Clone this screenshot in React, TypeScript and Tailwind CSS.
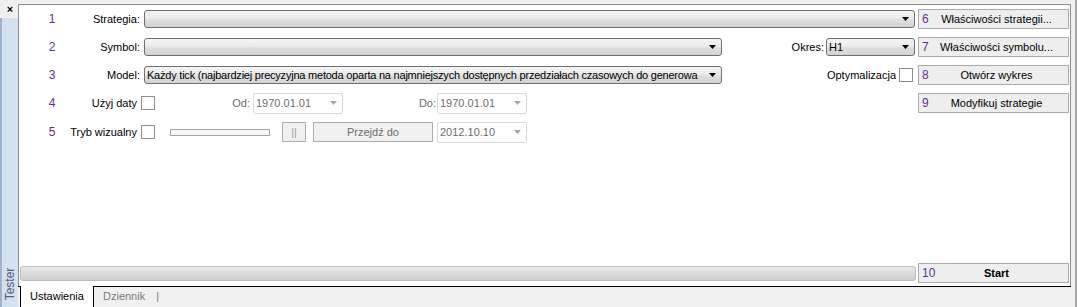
import type { ReactNode } from "react";
import clsx from "clsx";

// Strategy tester panel (Polish MT4 layout). Pixel sizes follow the classic WinForms look.

function Arrow({ disabled }: { disabled?: boolean }) {
  return (
    <svg width="7" height="4" viewBox="0 0 7 4" className="shrink-0">
      <path d="M0 0h7L3.5 4z" fill={disabled ? "#a8a8a8" : "#000"} />
    </svg>
  );
}

function Combo({ className, children }: { className?: string; children?: ReactNode }) {
  return (
    <div
      className={clsx(
        "flex h-[18px] items-center gap-[4px] rounded-[3px] border border-[#707070] bg-[linear-gradient(#f4f4f4,#ebebeb_45%,#dedede_55%,#d4d4d4)] pl-[2px] pr-[5px]",
        className,
      )}
    >
      <span className="flex-1 overflow-hidden whitespace-nowrap">{children}</span>
      <Arrow />
    </div>
  );
}

function DateBox({ value, className }: { value: string; className?: string }) {
  return (
    <div
      className={clsx(
        "flex h-[21px] w-[90px] shrink-0 items-center rounded-[2px] border border-[#d9d9d9] bg-white pl-[2px] pr-[5px] text-[#6d6d6d]",
        className,
      )}
    >
      <span className="flex-1">{value}</span>
      <Arrow disabled />
    </div>
  );
}

function Check({ className }: { className?: string }) {
  return <div className={clsx("h-[14px] w-[14px] shrink-0 border border-[#8f8f8f] bg-white", className)} />;
}

function Num({ n }: { n: number }) {
  return <span className="w-[66px] shrink-0 text-center text-[12px] text-[#65308f]">{n}</span>;
}

// Right-aligned label that may spill to the left of its slot.
function Label({ children, className }: { children: ReactNode; className?: string }) {
  return <div className={clsx("flex shrink-0 justify-end whitespace-nowrap", className)}>{children}</div>;
}

function SideButton({ n, label, bold }: { n: number; label: string; bold?: boolean }) {
  return (
    <div className="relative flex h-[20px] w-[151px] shrink-0 items-center justify-center border border-[#acacac] bg-[#eeeeee]">
      <span className="absolute left-[3px] text-[12px] text-[#65308f]">{n}</span>
      <span className={clsx("pl-[6px]", bold && "font-bold")}>{label}</span>
    </div>
  );
}

export default function App() {
  return (
    <div className="flex h-[307px] w-[1077px] overflow-hidden bg-[#f0f0f0] font-['Liberation_Sans',Arial,sans-serif] text-[11px] text-black">
      {/* left dock strip */}
      <div className="flex w-[18px] shrink-0 flex-col">
        <div className="flex h-[18px] shrink-0 items-center justify-center pl-[2px] text-[11px] font-bold leading-none">×</div>
        <div className="flex flex-1 flex-col items-center justify-end border-l-2 border-[#9fb3cc] bg-[#d5e1ee] pb-[3px]">
          <div className="flex h-[40px] w-[14px] shrink-0 items-center justify-center">
            <span className="shrink-0 -rotate-90 text-[12px] leading-[12px] text-[#4a5f80]">Tester</span>
          </div>
        </div>
      </div>

      {/* tab control */}
      <div className="flex w-[1053px] shrink-0 flex-col pt-[4px]">
        <div className="flex flex-1 flex-col border-x border-t border-[#8e8f8f] bg-white pt-[4px] pr-[1px]">
          {/* row 1 */}
          <div className="flex h-[20px] items-center">
            <Num n={1} />
            <Label className="w-[55px]">Strategia:</Label>
            <Combo className="ml-[4px] w-[771px]" />
            <div className="flex-1" />
            <SideButton n={6} label="Właściwości strategii..." />
          </div>
          {/* row 2 */}
          <div className="mt-[8px] flex h-[20px] items-center">
            <Num n={2} />
            <Label className="w-[55px]">Symbol:</Label>
            <Combo className="ml-[4px] w-[578px]" />
            <span className="ml-auto mr-[2px]">Okres:</span>
            <Combo className="w-[89px]">H1</Combo>
            <div className="w-[3px]" />
            <SideButton n={7} label="Właściwości symbolu..." />
          </div>
          {/* row 3 */}
          <div className="mt-[8px] flex h-[20px] items-center">
            <Num n={3} />
            <Label className="w-[55px]">Model:</Label>
            <Combo className="ml-[4px] w-[578px]">
              <span className="tracking-[-0.22px]">
                Każdy tick (najbardziej precyzyjna metoda oparta na najmniejszych dostępnych przedziałach czasowych do generowa
              </span>
            </Combo>
            <span className="ml-auto mr-[3px]">Optymalizacja</span>
            <Check />
            <div className="w-[5px]" />
            <SideButton n={8} label="Otwórz wykres" />
          </div>
          {/* row 4 */}
          <div className="mt-[8px] flex h-[20px] items-center">
            <Num n={4} />
            <Label className="w-[52px]">Użyj daty</Label>
            <Check className="ml-[4px]" />
            <Label className="w-[95px] text-[#6d6d6d]">Od:</Label>
            <DateBox value="1970.01.01" className="ml-[3px]" />
            <Label className="w-[93px] text-[#6d6d6d]">Do:</Label>
            <DateBox value="1970.01.01" className="ml-[1px]" />
            <div className="flex-1" />
            <SideButton n={9} label="Modyfikuj strategie" />
          </div>
          {/* row 5 */}
          <div className="mt-[9px] flex h-[20px] items-center">
            <Num n={5} />
            <Label className="w-[52px]">Tryb wizualny</Label>
            <Check className="ml-[4px]" />
            <div className="ml-[15px] h-[7px] w-[100px] shrink-0 border border-[#a5a5a5] bg-[#f7f7f7]" />
            <div className="ml-[12px] flex h-[20px] w-[24px] shrink-0 items-center justify-center border border-[#adadad] bg-[#f0f0f0] text-[#a0a0a0]">
              ||
            </div>
            <div className="ml-[7px] flex h-[20px] w-[120px] shrink-0 items-center justify-center border border-[#adadad] bg-[#f0f0f0] text-[#6d6d6d]">
              Przejdź do
            </div>
            <DateBox value="2012.10.10" className="ml-[4px]" />
          </div>

          {/* progress + start */}
          <div className="mt-auto mb-[3px] flex h-[20px] items-center">
            <div className="ml-[1px] h-[15px] w-[896px] rounded-[3px] border border-[#bcbcbc] bg-[linear-gradient(#e9e9e9,#dcdcdc_50%,#cfcfcf)]" />
            <div className="flex-1" />
            <SideButton n={10} label="Start" bold />
          </div>
        </div>

        {/* tabs */}
        <div className="flex h-[21px] shrink-0">
          <div className="w-[2px] border-t border-black" />
          <div className="flex w-[74px] items-center justify-center border-x border-black bg-white pb-[1px]">Ustawienia</div>
          <div className="flex flex-1 items-center border-t border-black pb-[1px] pl-[9px]">
            <span className="text-[#7a7a7a]">Dziennik</span>
            <span className="ml-[11px] text-[#7a7a7a]">|</span>
          </div>
        </div>
      </div>

      {/* right edge */}
      <div className="w-[6px] shrink-0 border-r-2 border-[#a9a9a9]" />
    </div>
  );
}
